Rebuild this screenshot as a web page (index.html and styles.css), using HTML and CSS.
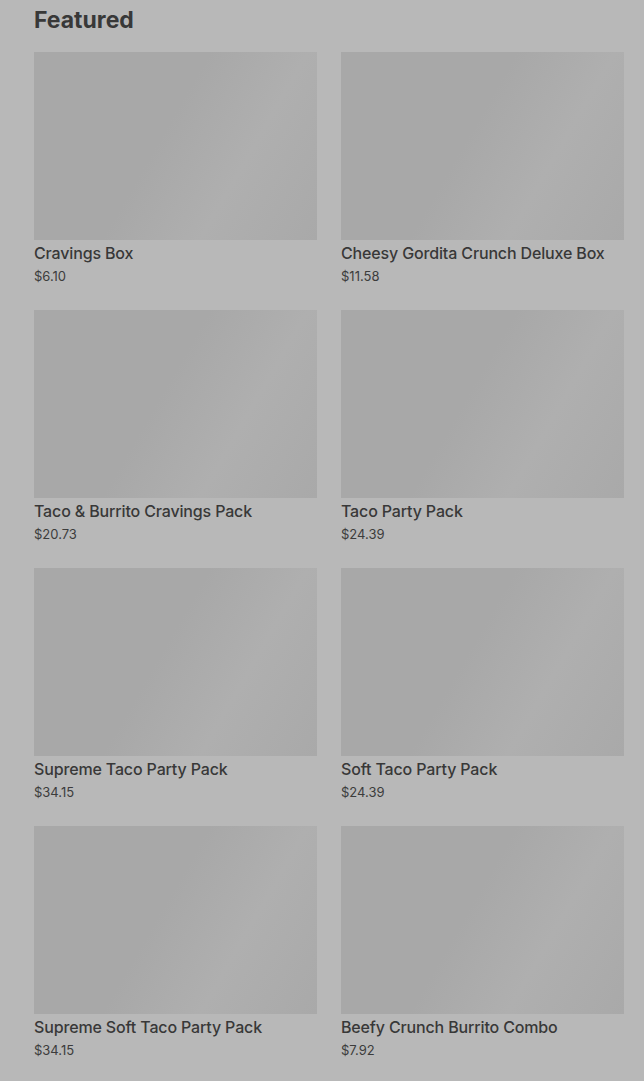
FILE: index.html
```html
<!DOCTYPE html>
<html lang="en">
<head>
    <meta charset="UTF-8">
    <meta name="viewport" content="width=device-width, initial-scale=1.0">
    <title>Featured</title>
    <link rel="stylesheet" href="styles.css">
</head>
<body>
    <h1 class="titulo">Featured</h1>
    <div class="grilla">
        <div class="item">
            <div class="foto"></div>
            <h3>Cravings Box</h3>
            <p>$6.10</p>
        </div>
        <div class="item">
            <div class="foto"></div>
            <h3>Cheesy Gordita Crunch Deluxe Box</h3>
            <p>$11.58</p>
        </div>
        <div class="item">
            <div class="foto"></div>
            <h3>Taco &amp; Burrito Cravings Pack</h3>
            <p>$20.73</p>
        </div>
        <div class="item">
            <div class="foto"></div>
            <h3>Taco Party Pack</h3>
            <p>$24.39</p>
        </div>
        <div class="item">
            <div class="foto"></div>
            <h3>Supreme Taco Party Pack</h3>
            <p>$34.15</p>
        </div>
        <div class="item">
            <div class="foto"></div>
            <h3>Soft Taco Party Pack</h3>
            <p>$24.39</p>
        </div>
        <div class="item">
            <div class="foto"></div>
            <h3>Supreme Soft Taco Party Pack</h3>
            <p>$34.15</p>
        </div>
        <div class="item">
            <div class="foto"></div>
            <h3>Beefy Crunch Burrito Combo</h3>
            <p>$7.92</p>
        </div>
    </div>
</body>
</html>
```

FILE: styles.css
```css
body {
    font-family: Inter, "Noto Sans", sans-serif;
    background-color: #b8b8b8;
    color: #383838;
    margin: 0;
    padding: 0 20px 0 34px;
}
.titulo {
    font-size: 23px;
    font-weight: 700;
    line-height: 28px;
    margin: 6px 0 18px 0;
    letter-spacing: 0;
}
.grilla {
    display: grid;
    grid-template-columns: 1fr 1fr;
    column-gap: 24px;
    row-gap: 25px;
}
.foto {
    height: 188px;
    background: linear-gradient(120deg, #a8a8a8 0%, #a8a8a8 45%, #afafaf 70%, #a9a9a9 100%);
}
.item h3 {
    font-size: 16px;
    font-weight: 500;
    line-height: 20px;
    margin: 3px 0 4px 0;
    letter-spacing: -0.15px;
}
.item p {
    font-size: 13px;
    line-height: 18px;
    margin: 0;
    color: #3c3c3c;
}
```
